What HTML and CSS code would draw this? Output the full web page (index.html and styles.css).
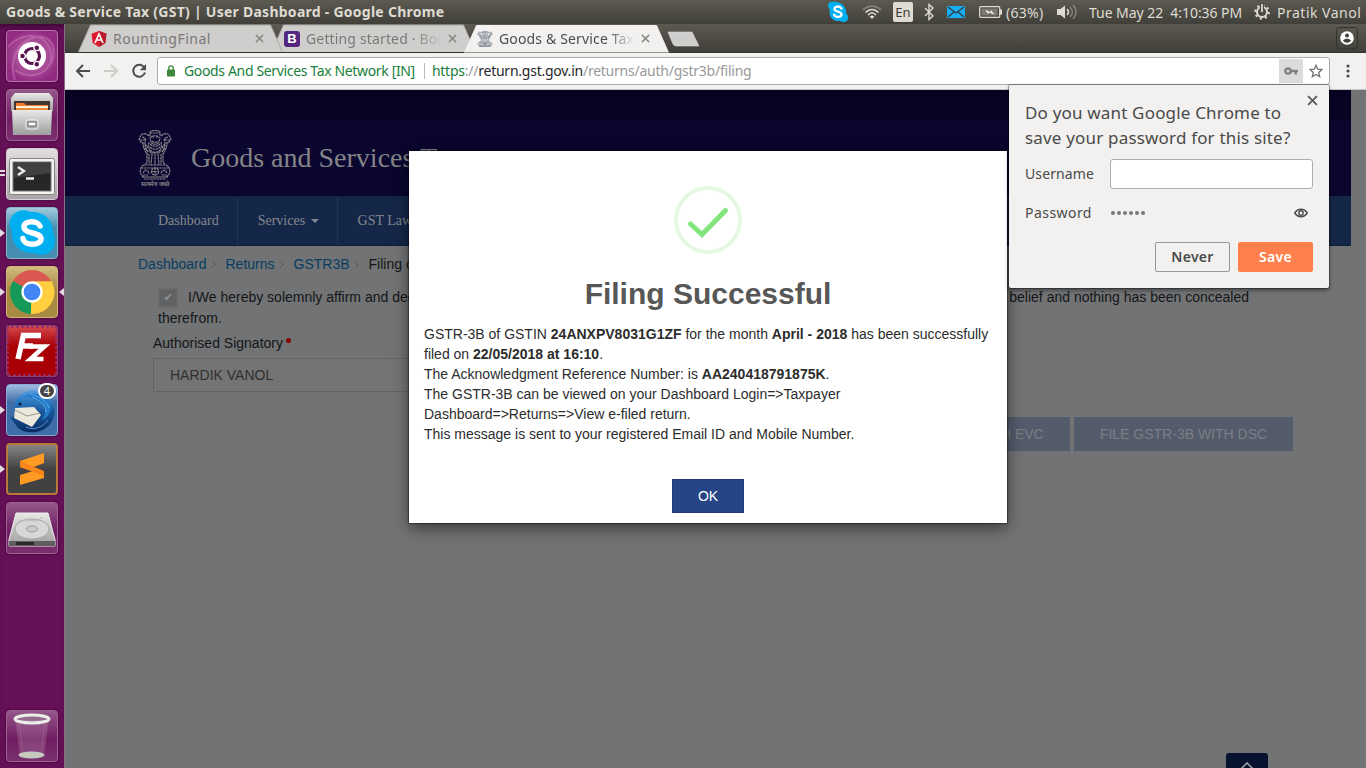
FILE: index.html
```html
<!DOCTYPE html>
<html lang="en">
<head>
<meta charset="utf-8">
<title>Goods &amp; Service Tax (GST) | User Dashboard</title>
<link rel="stylesheet" href="styles.css">
</head>
<body>
<svg class="defs" width="0" height="0">
  <defs>
    <symbol id="x" viewBox="0 0 10 10"><path d="M1 1l8 8M9 1L1 9" fill="none" stroke="currentColor" stroke-width="1.7"/></symbol>
    <symbol id="emblem" viewBox="0 0 34 50" preserveAspectRatio="none">
      <g fill="none" stroke="currentColor" stroke-dasharray="2.6 .5">
        <path d="M12 6V2l2-1.4h6L22 2v4M12 3h10M11 6c-3-3-6-3-8-1L1 9l2 3 2 1M23 6c3-3 6-3 8-1l2 4-2 3-2 1"/>
        <path d="M4 7l3 1M30 7l-3 1M2 10h4l2-2M32 10h-4l-2-2M12 8c2-3 8-3 10 0l-1 4c-1 3-7 3-8 0zM14 7h2M18 7h2M14 11c2 2 4 2 6 0"/>
        <path d="M5 12c0 6 2 9 4 12M29 12c0 6-2 9-4 12M8 9c-2 4-1 9 2 13M26 9c2 4 1 9-2 13M11 12c-1 4 0 8 2 11M23 12c1 4 0 8-2 11"/>
        <path d="M12 14c3 3 7 3 10 0M12 17c3 3 7 3 10 0M12 20c3 3 7 3 10 0M13 23h8M7 14l3 3-3 2 4 3M27 14l-3 3 3 2-4 3"/>
        <path d="M9 23v9l-2 3M11 24v10M14 24l-1 11M17 24v11M20 24l1 11M23 24v10M25 23v9l2 3"/>
        <path d="M6 35h22c5 2 5 10 0 12H6c-5-2-5-10 0-12zM3 38h28M4 47h26M6 49h22"/>
        <circle cx="17" cy="41.500" r="3.600"/><path d="M17 38v7M13.500 41.500h7M5 43l2-3 3 1 1 3M29 43l-2-3-3 1-1 3M5 45h5M24 45h5"/>
      </g>
    </symbol>
    <linearGradient id="metal" x1="0" y1="0" x2="0" y2="1"><stop offset="0" stop-color="#e8e8e6"/><stop offset="1" stop-color="#9d9d9b"/></linearGradient>
    <linearGradient id="bird" x1="0" y1="0" x2="0" y2="1"><stop offset="0" stop-color="#4f9fe2"/><stop offset=".5" stop-color="#17589f"/><stop offset="1" stop-color="#0a2c60"/></linearGradient>
  </defs>
</svg>
<div class="desktop">
  <header class="panel">
    <span class="window-title">Goods &amp; Service Tax (GST) | User Dashboard - Google Chrome</span>
    <div class="indicators">
      <svg width="22" height="22" viewBox="0 0 22 22"><path d="M6 1C11 0 20 4 19 12c2 2 3 5 1 8-3 2-5 1-7 0C6 21 1 15 3 9-1 4 2 0 6 1z" fill="#00aff0"/><path d="M14.500 7.500C13 4.500 7 5 7.500 8.300c.4 2.700 7 1.900 7 5 0 3.600-6.400 3.400-7.500.4" fill="none" stroke="#fff" stroke-width="2.300" stroke-linecap="round"/></svg>
      <svg width="20" height="16" viewBox="0 0 20 16"><g fill="none" stroke-width="1.700"><path d="M1 6c5-5 13-5 18 0" stroke="#88867e"/><path d="M3.500 8.500c4-4 9-4 13 0M6 11c3-3 5-3 8 0" stroke="#dfdbd2"/></g><path d="M7.500 12.500c2-1.500 3-1.500 5 0L10 15z" fill="#dfdbd2"/></svg>
      <span class="lang">En</span>
      <svg width="14" height="18" viewBox="0 0 14 18"><path d="M3 5l8 8-4 3.500v-15L11 5l-8 8" fill="none" stroke="#dfdbd2" stroke-width="1.400"/></svg>
      <svg width="18" height="12" viewBox="0 0 18 12"><rect width="18" height="12" fill="#19aef0"/><path d="M1 1l8 6 8-6M1 11l6-5M17 11l-6-5" fill="none" stroke="#32393b" stroke-width="1.200"/></svg>
      <svg width="24" height="12" viewBox="0 0 24 12"><rect x=".7" y=".7" width="20" height="10.600" rx="1" fill="none" stroke="#dfdbd2" stroke-width="1.300"/><rect x="2.500" y="2.500" width="16" height="7" fill="#7d7b74"/><path d="M22 3.500v5" stroke="#dfdbd2" stroke-width="2"/><path d="M5 2.500l6 3 1-2 5 6-7-2.500-1 2z" fill="#eeeae2" stroke="#444" stroke-width=".5"/></svg>
      <span class="battery">(63%)</span>
      <svg width="20" height="16" viewBox="0 0 20 16"><path d="M0 5h3.500L8 1.500v13L3.500 11H0z" fill="#dfdbd2"/><path d="M10 5c2 2 2 4 0 6" fill="none" stroke="#dfdbd2" stroke-width="1.600"/><path d="M13 3c3 3 3 7 0 10M16 1c4 4 4 10 0 14" fill="none" stroke="#87857d" stroke-width="1.400"/></svg>
      <span class="clock">Tue May 22&nbsp; 4:10:36 PM</span>
      <svg width="18" height="18" viewBox="0 0 18 18"><circle cx="9" cy="9" r="5" fill="none" stroke="#dfdbd2" stroke-width="2"/><circle cx="9" cy="9" r="6.800" fill="none" stroke="#dfdbd2" stroke-width="2" stroke-dasharray="2.200 3.140"/><path d="M9 0v8" stroke="#4a4943" stroke-width="4"/><path d="M9 1v8" stroke="#dfdbd2" stroke-width="1.800"/></svg>
      <span class="user">Pratik Vanol</span>
    </div>
  </header>

  <div class="workspace">
    <nav class="launcher">
      <div class="tile dash"><svg viewBox="0 0 52 52"><path d="M9 50C2 32 12 10 30 7s23 18 12 30M2 17C18-1 43 4 45 24S24 51 9 40" fill="none" stroke="#d483c4" stroke-opacity=".45" stroke-width="2"/><circle cx="26" cy="26" r="14" fill="#fff"/><circle cx="26" cy="26" r="7.500" fill="none" stroke="#5b1250" stroke-width="3.200"/><g stroke="#fff" stroke-width="1.300" fill="#5b1250"><circle cx="16.500" cy="26" r="2.900"/><circle cx="30.800" cy="17.800" r="2.900"/><circle cx="30.800" cy="34.200" r="2.900"/></g></svg></div>
      <div class="tile"><svg viewBox="0 0 52 52"><path d="M9 4h34l4 5v13H5V9z" fill="url(#metal)"/><path d="M8 12h36v11H8z" fill="#443632"/><path d="M10 14h8l2 2h22v6H10z" fill="#f47b27"/><path d="M10 17h32v5H10z" fill="#fff3dc"/><path d="M10 19h32v4H10z" fill="#e98935"/><path d="M6 21h40l-1 25H7z" fill="url(#metal)"/><rect x="20" y="31" width="12" height="9" rx="2" fill="#aaa" stroke="#f3f3f3"/><rect x="22" y="33" width="8" height="4" rx="1" fill="#fff" stroke="#666"/></svg></div>
      <div class="tile terminal"><i class="pip double"></i><svg viewBox="0 0 52 52"><rect x="3.500" y="10.500" width="45" height="36" rx="2" fill="#f2f2ef" stroke="#858282"/><rect x="7" y="14" width="38" height="29" fill="#272826" stroke="#777"/><path d="M8 15h36v10L8 30z" fill="#4b4c4a" opacity=".7"/><path d="M12 19l6 4-6 4M20 30.500h8" fill="none" stroke="#eee" stroke-width="2.300"/></svg></div>
      <div class="tile skype"><i class="pip"></i><svg viewBox="0 0 52 52"><path d="M13 4c5-2 10 0 12 1 13-1 23 9 22 21 3 5 3 14-3 19-5 4-12 3-16 1C14 47 5 37 6 24 1 15 5 7 13 4z" fill="#00aff0"/><path d="M34 19c-2-6-17-6-16 1.500 1 7 17 4 17 11.500 0 7-17 7-18-.5" fill="none" stroke="#fff" stroke-width="5.500" stroke-linecap="round"/></svg></div>
      <div class="tile chrome"><i class="pip"></i><i class="pip-right"></i><svg viewBox="0 0 52 52"><path d="M26 26L7 15a22 22 0 0 1 38 0z" fill="#d95850"/><path d="M26 26L7 15a22 22 0 0 0 18 33z" fill="#159957"/><path d="M26 26L25 48A22 22 0 0 0 46 16H26z" fill="#ffcf3f"/><path d="M26 26l-1 22 10-18z" fill="#ffcf3f"/><path d="M26 15.500h20" stroke="#e9b83c"/><circle cx="26" cy="26" r="9.500" fill="#4285f4" stroke="#fff" stroke-width="2.300"/></svg></div>
      <div class="tile filezilla"><svg viewBox="0 0 52 52"><rect x="1.500" y="1.500" width="49" height="49" fill="none" stroke="#8f3370" stroke-width="3" stroke-dasharray="0 5" stroke-linecap="round"/><path d="M12 34L18 8M15 21h12M17 10.500h18" fill="none" stroke="#fff" stroke-width="5.500"/><path d="M23 21.500h15.500L24.500 34h13" fill="none" stroke="#fff" stroke-width="4.500"/></svg></div>
      <div class="tile thunderbird"><i class="pip"></i><svg viewBox="0 0 52 52"><path d="M8 25C8 10 22 3 37 8c12 5 15 20 8 31C36 51 19 50 12 44l-8-11c2 1 5 0 4-8z" fill="url(#bird)"/><path d="M9 24l19-1 7 8-9 12-18-9z" fill="#ece8dc"/><path d="M9 26l12 6 13-3" fill="none" stroke="#9c988e"/><path d="M9 24c0-6 4-10 10-11 6-1 9 4 15 5 6 2 7 11 2 18 10-4 11-16 5-22-8-8-26-6-32 10z" fill="#247cc8"/><path d="M24 10c7 2 16 5 19 14M20 43c8 4 17 0 22-7M26 13c7 3 14 8 14 15" fill="none" stroke="#75b6ee" stroke-opacity=".7"/><circle cx="14" cy="20" r="1.500" fill="#071b36"/></svg><b class="count">4</b></div>
      <div class="tile sublime"><i class="pip"></i><svg viewBox="0 0 52 52"><path d="M14 18l24-8v10l-13 5 13 4v6l-24 7V32l13-4-13-4z" fill="#ff9a22"/><path d="M14 18v6l24 9v-5z" fill="#f9861a"/></svg></div>
      <div class="tile"><svg viewBox="0 0 52 52"><path d="M10 11h32l7 27v6H3v-6z" fill="url(#metal)" stroke="#eee"/><ellipse cx="26" cy="27" rx="17" ry="10" fill="#d8d8d6" stroke="#aaa"/><ellipse cx="26" cy="27" rx="5.500" ry="3" fill="#ccc" stroke="#999"/><path d="M12 20c10-6 14 4 25-5" fill="none" stroke="#b8b8b8"/><path d="M3 39h46v5H3z" fill="#5f5f5e"/><path d="M10 40h18v3H10z" fill="#292929"/></svg></div>
      <div class="tile trash"><svg viewBox="0 0 52 52"><path d="M9 10h34l-5 35c-3 4-21 4-24 0z" fill="#c3a0bb" fill-opacity=".25"/><path d="M13 12l4 31M39 12l-4 31" stroke="#c8a0c0" stroke-opacity=".2"/><ellipse cx="25.500" cy="45" rx="13" ry="3.500" fill="#c5c9c0"/><ellipse cx="26" cy="9" rx="17" ry="4" fill="#a28b9f" fill-opacity=".5" stroke="#eceeea" stroke-width="3"/></svg></div>
    </nav>

    <div class="browser">
      <div class="tabstrip">
        <div class="tab first"><svg class="tab-shape" viewBox="0 0 205 28"><path d="M.5 28L12.500 1h180l12 27"/></svg>
          <svg class="favicon" viewBox="0 0 16 16"><path d="M8 0l7.500 2.700L14.300 12 8 16l-6.300-4L.5 2.700z" fill="#dd1b2d"/><path d="M8 0l7.500 2.700L14.300 12 8 16z" fill="#b71c2c"/><path d="M4 12L8 3l4 9M5.600 9h4.800" fill="none" stroke="#fff" stroke-width="1.600"/></svg>
          <span class="tab-title wide">RountingFinal</span><svg class="tab-close"><use href="#x"/></svg></div>
        <div class="tab second"><svg class="tab-shape" viewBox="0 0 205 28"><path d="M.5 28L12.500 1h180l12 27"/></svg>
          <span class="favicon bootstrap">B</span><span class="tab-title fade">Getting started · Bootstrap</span><svg class="tab-close"><use href="#x"/></svg></div>
        <div class="tab active"><svg class="tab-shape" viewBox="0 0 205 28"><path d="M.5 28L12.500 1h180l12 27"/></svg>
          <svg class="favicon emblem-small"><use href="#emblem"/></svg><span class="tab-title fade">Goods &amp; Service Tax</span><svg class="tab-close"><use href="#x"/></svg></div>
        <svg class="new-tab" width="33" height="16" viewBox="0 0 33 16"><path d="M1 1h24l7 14H9q-2 0-3-2z" fill="#cfcecc" stroke="#e2e0dd" stroke-width=".6"/></svg>
        <span class="profile"><svg width="14" height="14" viewBox="0 0 14 14"><circle cx="7" cy="7" r="6.800" fill="#fff"/><circle cx="7" cy="4.600" r="2" fill="#41403b"/><path d="M3 9.500c2-2.200 6-2.200 8 0-2 3-6 3-8 0z" fill="#41403b"/></svg></span>
      </div>
      <div class="toolbar">
        <svg class="nav-icon" viewBox="0 0 16 16"><path d="M15 8H2M8 2L2 8l6 6" fill="none" stroke="#4d4d4d" stroke-width="2"/></svg>
        <svg class="nav-icon" viewBox="0 0 16 16"><path d="M1 8h13M8 2l6 6-6 6" fill="none" stroke="#cfcdca" stroke-width="2"/></svg>
        <svg class="nav-icon" viewBox="0 0 16 16"><path d="M13.300 4.500A6 6 0 1 0 14 9.500" fill="none" stroke="#4d4d4d" stroke-width="2"/><path d="M15 1v6.200H8.800z" fill="#4d4d4d"/></svg>
        <div class="omnibox">
          <svg class="lock" width="8" height="12" viewBox="0 0 8 12"><rect y="4.500" width="8" height="7" rx=".8" fill="#3b883b"/><path d="M1.800 5V3a2.200 2.200 0 0 1 4.400 0v2" fill="none" stroke="#3b883b" stroke-width="1.300"/></svg>
          <span class="identity">Goods And Services Tax Network [IN]</span>
          <span class="url"><em>https</em>://<b>return.gst.gov.in</b>/returns/auth/gstr3b/filing</span>
          <span class="key"><svg width="14" height="8" viewBox="0 0 14 8"><circle cx="4" cy="4" r="2.700" fill="none" stroke="#808080" stroke-width="2.300"/><path d="M6 4h8M11.700 4v3.400" stroke="#808080" stroke-width="2.400"/></svg></span>
          <svg class="star" width="14" height="14" viewBox="0 0 14 14"><path d="M7 1.300l1.700 3.900 4.200.4-3.200 2.800 1 4.200L7 10.400l-3.700 2.200 1-4.200L1.100 5.600l4.200-.4z" fill="none" stroke="#717171" stroke-width="1.300"/></svg>
        </div>
        <svg class="menu" width="4" height="14" viewBox="0 0 4 14"><g fill="#4d4d4d"><circle cx="2" cy="2" r="1.600"/><circle cx="2" cy="7" r="1.600"/><circle cx="2" cy="12" r="1.600"/></g></svg>
      </div>

      <div class="viewport">
        <main class="site">
          <div class="topbar"></div>
          <div class="masthead">
            <div class="emblem"><svg width="34" height="50"><use href="#emblem"/></svg><span>सत्यमेव जयते</span></div>
            <h1>Goods and Services Tax</h1>
          </div>
          <nav class="site-nav"><a>Dashboard</a><a>Services <i class="caret"></i></a><a class="last">GST Law</a></nav>
          <div class="content">
            <div class="crumbs"><a>Dashboard</a><i></i><a>Returns</a><i></i><a>GSTR3B</a><i></i><span>Filing of Tax</span></div>
            <p class="declaration"><span class="check">✔</span>I/We hereby solemnly affirm and declare that the information given herein above is true and correct to the best of my knowledge and belief and nothing has been concealed therefrom.</p>
            <label class="signatory">Authorised Signatory<i></i></label>
            <div class="select">HARDIK VANOL</div>
            <div class="actions"><span class="btn">FILE GSTR-3B WITH EVC</span><span class="btn">FILE GSTR-3B WITH DSC</span></div>
          </div>
        </main>

        <section class="modal">
          <svg class="success" width="68" height="68" viewBox="0 0 68 68"><circle cx="34" cy="34" r="32" fill="none" stroke="#e5f9e2" stroke-width="4"/><path d="M16.500 38L28 48.500 51.500 24.500" fill="none" stroke="#82e57e" stroke-width="5" stroke-linecap="round"/></svg>
          <h2>Filing Successful</h2>
          <p>GSTR-3B of GSTIN <b>24ANXPV8031G1ZF</b> for the month <b>April - 2018</b> has been successfully filed on <b>22/05/2018 at 16:10</b>.<br>The Acknowledgment Reference Number: is <b>AA240418791875K</b>.<br>The GSTR-3B can be viewed on your Dashboard Login=&gt;Taxpayer<br>Dashboard=&gt;Returns=&gt;View e-filed return.<br>This message is sent to your registered Email ID and Mobile Number.</p>
          <button class="ok">OK</button>
        </section>
        <div class="to-top"><svg width="14" height="9" viewBox="0 0 14 9"><path d="M1 8l6-6 6 6" fill="none" stroke="#9a9da3" stroke-width="1.600"/></svg></div>
      </div>

      <aside class="bubble">
        <svg class="bubble-close"><use href="#x"/></svg>
        <h3>Do you want Google Chrome to<br>save your password for this site?</h3>
        <div class="field"><span>Username</span><div class="text-input"></div></div>
        <div class="field password"><span>Password</span><div class="dots"><i></i><i></i><i></i><i></i><i></i><i></i></div><svg width="14" height="10" viewBox="0 0 14 10"><path d="M.8 5c3-5 9.400-5 12.400 0-3 5-9.400 5-12.400 0z" fill="none" stroke="#4d4d4d" stroke-width="1.500"/><circle cx="7" cy="5" r="2.200" fill="none" stroke="#4d4d4d" stroke-width="1.400"/></svg></div>
        <div class="choices"><button>Never</button><button class="save">Save</button></div>
      </aside>
    </div>
  </div>
</div>
</body>
</html>
```
FILE: styles.css
```css
* { box-sizing: border-box; }
body { margin: 0; overflow: hidden; font-family: "Liberation Sans", Arial, sans-serif; font-size: 14px; }
i, em { font-style: normal; }
.defs { display: block; position: absolute; }
.desktop { width: 1366px; height: 768px; display: flex; flex-direction: column; }

.panel { height: 24px; flex: none; display: flex; justify-content: space-between; background: linear-gradient(#5c5a50, #403f3a); color: #dfdbd2; font-family: "Noto Sans", sans-serif; font-size: 14px; line-height: 23px; white-space: nowrap; }
.window-title { padding-left: 6px; font-weight: 700; font-size: 14px; letter-spacing: .26px; }
.indicators { display: grid; grid-template-columns: 35px 31px 29px 25px 32px 27px 51px 32px 164px 24px 89px; align-items: center; }
.lang { width: 20px; height: 20px; border-radius: 2px; background: #dfdbd2; color: #3c3b37; line-height: 20px; text-align: center; font-size: 13px; }
.battery { letter-spacing: .3px; }
.clock { letter-spacing: -.05px; }
.user { letter-spacing: .5px; }

.workspace { flex: 1; min-height: 0; display: flex; }
.launcher { width: 65px; flex: none; padding: 6px 6px 6px 6px; display: flex; flex-direction: column; gap: 7px; background: #651157; border-right: 1px solid #886f85; box-shadow: inset 0 6px 6px -4px #37042f; }
.tile { position: relative; width: 52px; height: 52px; flex: none; border-radius: 4px; border: 1px solid #9f6293; background: linear-gradient(#94588a, #701c62 55%, #7b3170); box-shadow: 0 0 3px #3e0535; }
.tile > svg { display: block; width: 52px; height: 52px; margin: -1px; }
.dash { background: radial-gradient(circle, #b967a9 20%, #922c82 75%); border-color: #bd72af; }
.terminal { background: linear-gradient(#e1dde0, #aaa5a8); border-color: #d7cfd5; }
.skype { background: linear-gradient(#a3cbdd, #468eb0 40%); border-color: #8bb5c8; }
.chrome { background: linear-gradient(#d2bd7d, #a98a43 45%); border-color: #d0b678; }
.filezilla { background: linear-gradient(#d4494c, #a80005 40%); border-color: #8f4475; }
.thunderbird { background: linear-gradient(#9fbbe0, #3f6da9 35%); border-color: #8aabda; }
.sublime { background: linear-gradient(#858585, #414141 50%); border: 2px solid #bb793a; }
.sublime > svg { margin: -2px; }
.trash { margin-top: auto; }
.count { position: absolute; right: 1px; top: -2px; width: 18px; height: 16px; border: 2px solid #fff; border-radius: 8px; background: #454545; color: #fff; font: 11px/12px "Noto Sans", sans-serif; text-align: center; }
.pip { position: absolute; left: -7px; top: 21px; border: solid transparent; border-width: 4px 0 4px 5px; border-left-color: #e1dce0; }
.sublime .pip { left: -8px; top: 20px; }
.pip.double { width: 5px; height: 6px; border: solid #e1dce0; border-width: 2px 0; }
.pip-right { position: absolute; right: -7px; top: 21px; border: solid transparent; border-width: 4px 5px 4px 0; border-right-color: #e1dce0; }

.browser { position: relative; flex: 1; min-width: 0; display: flex; flex-direction: column; font-family: "Noto Sans", sans-serif; }
.tabstrip { height: 29px; flex: none; display: flex; align-items: flex-end; padding: 0 7px 0 13px; background: linear-gradient(#5c5a50, #403f3a); border-bottom: 1px solid #33322e; }
.tab { position: relative; isolation: isolate; width: 205px; height: 28px; margin-right: -12px; padding: 1px 0 0 13px; display: flex; align-items: center; color: #7a7977; }
.first { z-index: 1; }
.active { z-index: 2; margin-bottom: -1px; height: 29px; padding-bottom: 1px; color: #4d4d4d; }
.tab-shape { position: absolute; z-index: -1; left: 0; top: 0; width: 205px; height: 28px; fill: #cfcecc; stroke: #adaba8; stroke-width: 1; }
.active .tab-shape { height: 29px; fill: #f2f1ef; stroke: #f2f1ef; }
.favicon { width: 16px; height: 16px; flex: none; }
.emblem-small { color: #747b8b; stroke-width: 1.9px; }
.bootstrap { border-radius: 3px; background: #55267f; color: #fff; font: 700 13px/16px "Liberation Sans", sans-serif; text-align: center; }
.tab-title { width: 134px; margin-left: 6px; font-size: 14px; white-space: nowrap; overflow: hidden; letter-spacing: .15px; }
.wide { letter-spacing: .5px; }
.fade { -webkit-mask-image: linear-gradient(90deg, #000 108px, transparent 136px); mask-image: linear-gradient(90deg, #000 108px, transparent 136px); }
.tab-close { width: 9px; height: 9px; margin-left: 8px; color: #8d8c8a; }
.new-tab { margin: 0 auto 5px 10px; }
.profile { width: 22px; height: 22px; margin: 0 1px 3px 0; border: 1px solid #35342f; border-radius: 3px; display: flex; align-items: center; justify-content: center; }

.toolbar { height: 37px; flex: none; display: flex; align-items: center; padding: 0 16px 0 10px; background: #f2f1ef; border-bottom: 1px solid #c8c6c3; }
.nav-icon { width: 16px; height: 16px; margin-right: 12px; }
.omnibox { width: 1173px; height: 28px; margin-left: -2px; border: 1px solid #adabaa; border-radius: 3px; background: #fff; display: flex; align-items: center; padding: 0 6px 0 9px; white-space: nowrap; font-size: 14px; }
.identity { margin-left: 9px; padding-right: 9px; border-right: 1px solid #bbb; line-height: 16px; color: #18803b; letter-spacing: -.35px; }
.url { margin: -1px 0 0 7px; color: #999; letter-spacing: -.24px; }
.url em { color: #18803b; }
.url b { color: #262626; font-weight: 400; }
.key { width: 24px; height: 24px; margin-left: auto; background: #dcdcdc; display: flex; align-items: center; justify-content: center; }
.star { margin-left: 6px; }
.menu { margin-left: auto; }

.viewport { position: relative; flex: 1; min-height: 0; background: #717375; font-family: "Liberation Sans", Arial, sans-serif; color: #151617; }
.site { width: 1286px; }
.topbar { height: 30px; background: #080323; }
.masthead { height: 76px; padding: 10px 0 0 73px; display: flex; background: #0a062f; color: #858487; }
.emblem { width: 34px; height: 58px; stroke-width: 1.2px; }
.emblem svg { display: block; }
.emblem span { display: block; width: 34px; font: 700 6px/8px sans-serif; text-align: center; white-space: nowrap; }
.masthead h1 { margin: 0 0 0 19px; font: 400 28px/56px "Liberation Serif", serif; }
.site-nav { height: 50px; padding-left: 73px; display: flex; background: #152748; border-top: 1px solid #12223a; border-bottom: 1px solid #101e38; font: 14px/48px "Liberation Serif", serif; color: #85888e; }
.site-nav a { padding: 0 18px 0 20px; border-right: 1px solid #24364f; white-space: nowrap; }
.site-nav .last { border: 0; }
.caret { display: inline-block; margin-left: 2px; vertical-align: 2px; border: solid transparent; border-width: 4px 4px 0; border-top-color: #85888e; }
.content { padding: 8px 58px 0 73px; }
.crumbs { display: flex; line-height: 20px; color: #151617; }
.crumbs a { color: #083d61; }
.crumbs i { width: 5px; height: 5px; margin: 8px 11px 0 3px; border: solid #5b5d5f; border-width: 1px 1px 0 0; transform: rotate(45deg); }
.declaration { margin: 13px 0 0 20px; line-height: 21px; }
.check { display: inline-block; width: 20px; height: 20px; margin: 1px 10px 0 0; vertical-align: top; border: 2px solid #6a6a6b; background: #616263; color: #909192; font: 11px/16px "DejaVu Sans", sans-serif; text-align: center; }
.signatory { display: block; margin: 4px 0 0 15px; line-height: 20px; }
.signatory i { display: inline-block; width: 5px; height: 5px; margin-left: 3px; vertical-align: 5px; border-radius: 50%; background: #8b0000; }
.select { width: 500px; height: 34px; margin: 5px 0 0 15px; padding-left: 16px; border: 1px solid #626365; background: #747474; color: #303031; line-height: 32px; }
.actions { display: flex; justify-content: flex-end; gap: 4px; margin-top: 25px; }
.btn { width: 219px; height: 34px; background: #545c6c; color: #7b7e83; line-height: 34px; text-align: center; }

.modal { position: absolute; left: 344px; top: 61px; width: 598px; height: 372px; padding: 35px 15px 10px; display: flex; flex-direction: column; align-items: center; background: #fff; box-shadow: 0 5px 15px rgba(0,0,0,.5), 0 0 1px 1px rgba(0,0,0,.35); color: #2c2c2c; }
.success { display: block; flex: none; }
.modal h2 { margin: 22px 0 0; font-size: 30px; line-height: 36px; color: #575757; }
.modal p { align-self: stretch; margin: 12px 0 0; line-height: 20px; }
.ok { width: 72px; height: 34px; margin-top: auto; border: 1px solid #203c78; background: #264586; color: #fff; font: 14px "Liberation Sans", sans-serif; }
.to-top { position: absolute; right: 98px; bottom: 0; width: 42px; height: 15px; border-radius: 3px 3px 0 0; background: #08142f; text-align: center; line-height: 0; padding-top: 8px; }

.bubble { position: absolute; z-index: 5; left: 944px; top: 61px; width: 320px; height: 203px; padding: 15px 16px; border-radius: 2px; background: #f2f1ef; color: #4a4a4a; box-shadow: 0 0 0 1px rgba(0,0,0,.25), 0 2px 4px rgba(0,0,0,.5); }
.bubble-close { position: absolute; right: 11px; top: 10px; width: 11px; height: 11px; color: #5b5b5b; }
.bubble h3 { margin: 0; font-size: 17px; font-weight: 400; line-height: 25px; letter-spacing: .18px; white-space: nowrap; }
.field { height: 30px; margin-top: 9px; display: flex; align-items: center; font-size: 14px; }
.field > span { width: 85px; flex: none; margin-top: -2px; letter-spacing: .12px; }
.text-input { flex: 1; height: 30px; border: 1px solid #b0aeac; border-radius: 3px; background: #fff; }
.password { margin-top: 9px; padding-right: 5px; }
.password > span { letter-spacing: .45px; }
.dots { flex: 1; display: flex; gap: 2px; padding-left: 1px; }
.dots i { width: 4px; height: 4px; border-radius: 50%; background: #777; }
.choices { display: flex; justify-content: flex-end; gap: 8px; margin-top: 14px; }
.choices button { width: 75px; height: 30px; padding: 0 0 2px; border: 1px solid #999795; border-radius: 2px; background: #f2f1ef; color: #4a4a4a; font: 600 14px "Noto Sans", sans-serif; letter-spacing: .3px; }
.choices .save { border-color: #ff7f4d; background: #ff7f4d; color: #fff; }
```
